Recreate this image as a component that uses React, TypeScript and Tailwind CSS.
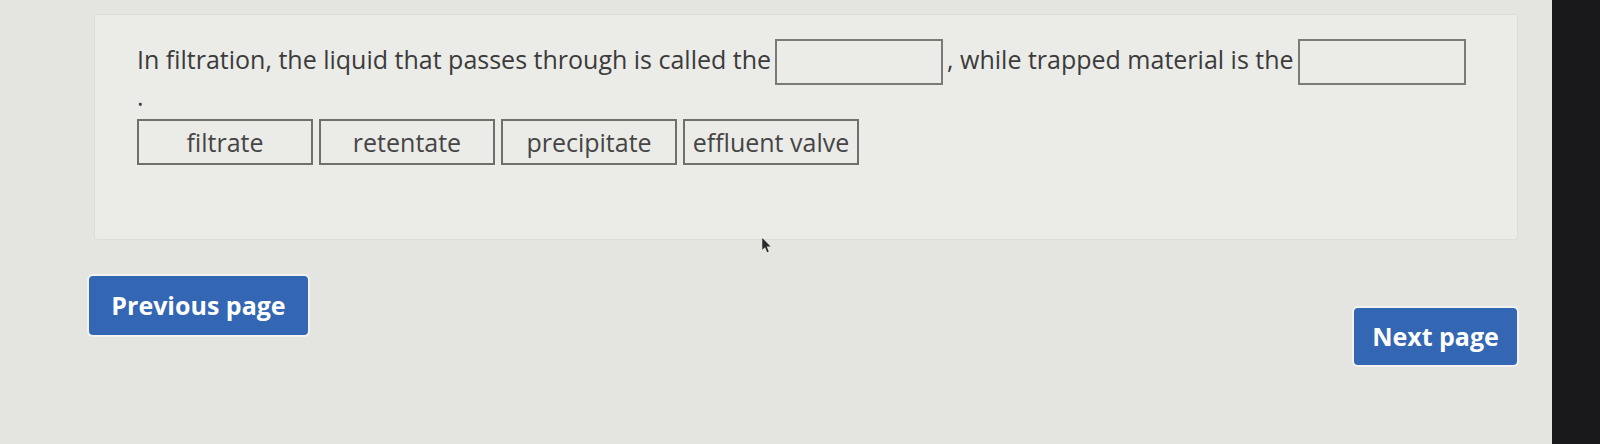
const choices = ["filtrate", "retentate", "precipitate", "effluent valve"];

const Blank = () => (
  <span className="mx-[4px] inline-block h-[46px] w-[168px] border-2 border-[#7a7a78] align-middle" />
);

const NavButton = ({ label, className }: { label: string; className?: string }) => (
  <button
    className={`rounded-[4px] bg-[#3366b3] text-[25px] font-bold text-white shadow-[0_0_0_2px_#f2f2f0] ${className ?? ""}`}
  >
    {label}
  </button>
);

// plain arrow cursor
const Cursor = () => (
  <svg viewBox="0 0 12 19" className="absolute left-[762px] top-[238px] h-[15px] w-[10px]">
    <path d="M0 0 L0 15 L3.6 11.6 L6.2 18 L8.2 17.2 L5.6 10.8 L10.5 10.8 Z" fill="#2a2a2a" />
  </svg>
);

export default function App() {
  return (
    <div className="flex h-[444px] w-full overflow-hidden bg-[#e4e4e0] font-['Open_Sans',sans-serif]">
      <div className="relative flex-1 pt-[14px]">
        <div className="ml-[94px] h-[226px] w-[1424px] rounded-[3px] border border-[#dcdcd8] bg-[#ebebe8] pl-[42px] pt-[20px]">
          <div className="text-[25px] text-[#3b3b3b]">
            <p className="leading-[48px]">
              In filtration, the liquid that passes through is called the
              <Blank />, while trapped material is the
              <Blank />
            </p>
            {/* the full stop wraps onto its own line */}
            <div className="h-[22px] leading-[22px]">.</div>
          </div>

          <div className="mt-[12px] flex gap-[6px]">
            {choices.map((c) => (
              <div
                key={c}
                className="flex h-[46px] w-[176px] items-center justify-center border-2 border-[#6f6f6d] text-[25px] text-[#454545]"
              >
                {c}
              </div>
            ))}
          </div>
        </div>

        <div className="ml-[89px] mt-[36px] flex w-[1428px] items-start justify-between">
          <NavButton label="Previous page" className="h-[59px] w-[219px]" />
          <NavButton label="Next page" className="mt-[32px] h-[57px] w-[163px]" />
        </div>

        <Cursor />
      </div>
      <div className="w-[48px] bg-[#18181a]" />
    </div>
  );
}
